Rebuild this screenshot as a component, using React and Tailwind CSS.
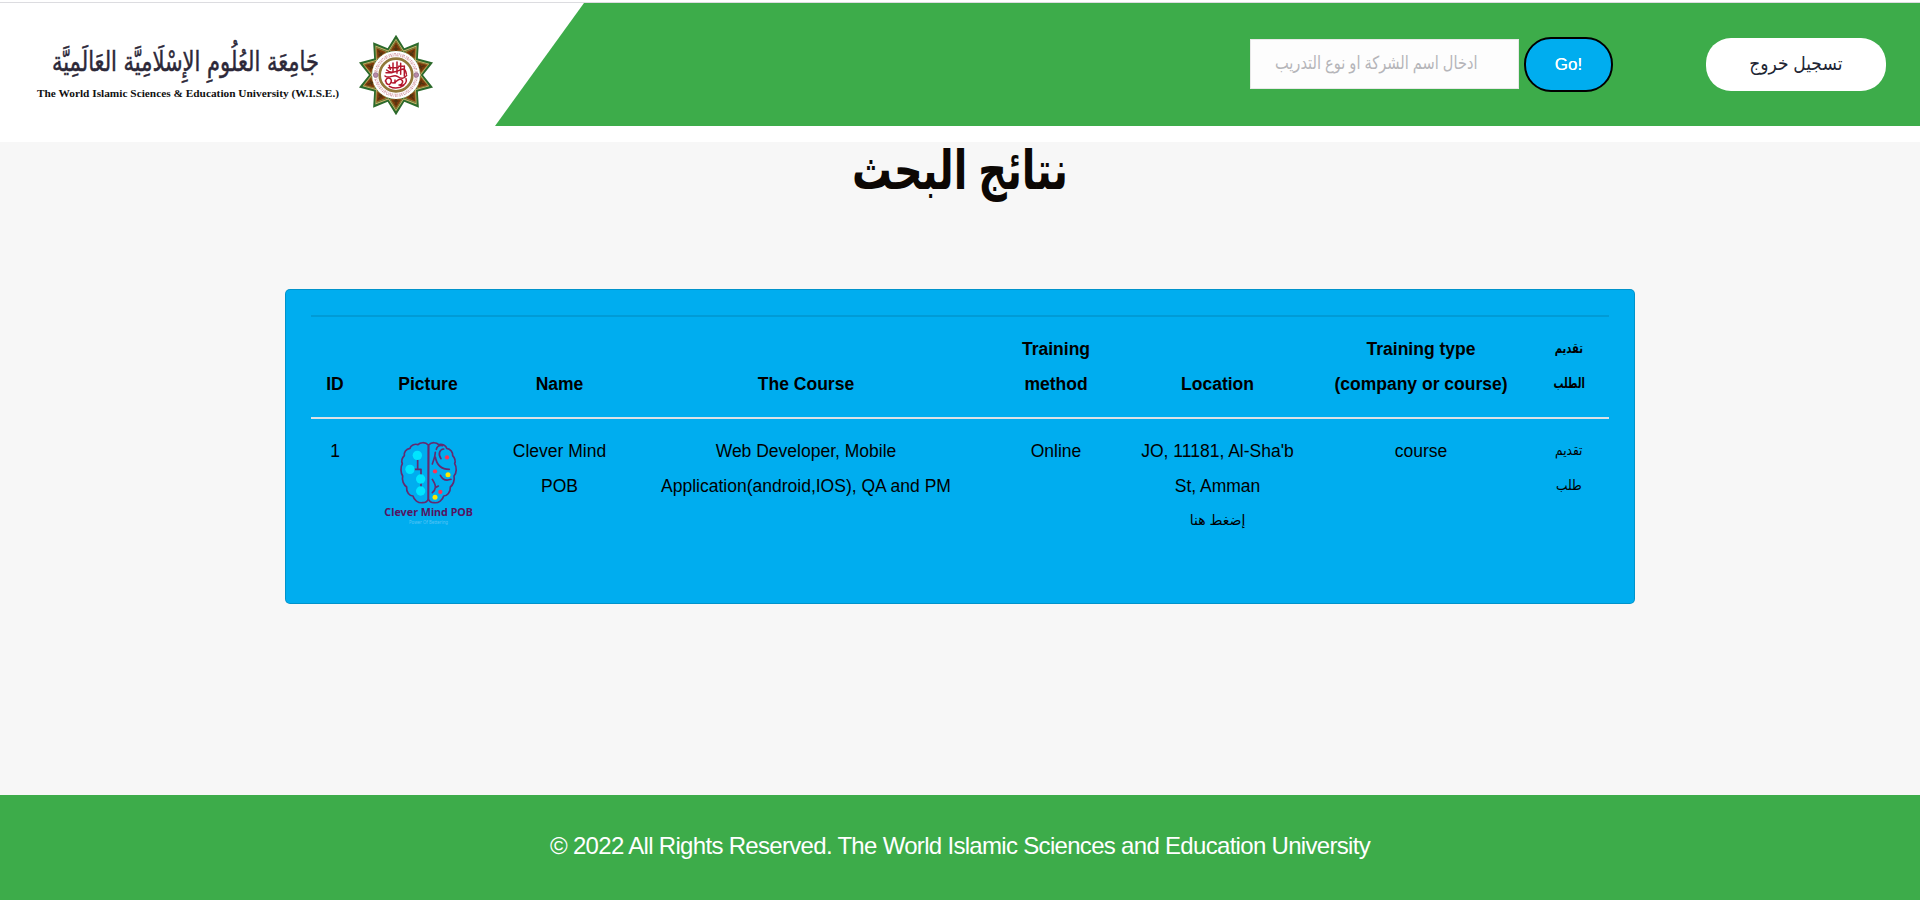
const columns = [
  { w: 'w-[48px]', head: ['ID'], body: ['1'] },
  { w: 'w-[138px]', head: ['Picture'], logo: true },
  { w: 'w-[125px]', head: ['Name'], body: ['Clever Mind', 'POB'] },
  { w: 'w-[368px]', head: ['The Course'], body: ['Web Developer, Mobile', 'Application(android,IOS), QA and PM'] },
  { w: 'w-[132px]', head: ['Training', 'method'], body: ['Online'] },
  { w: 'w-[191px]', head: ['Location'], body: ['JO, 11181, Al-Sha\'b', 'St, Amman', 'إضغط هنا'], fit: 'scale-x-100' },
  { w: 'w-[216px]', head: ['Training type', '(company or course)'], body: ['course'] },
  { w: 'w-[80px]', head: ['تقديم', 'الطلب'], headFit: 'scale-x-[0.71]', body: ['تقديم', 'طلب'], fit: 'scale-x-[0.87]' },
];

const isArabic = (s) => /[\u0600-\u06ff]/.test(s);

function Lines({ items, fit = '' }) {
  return items.map((t) => (
    <span key={t} className="block h-[35px] whitespace-nowrap">
      {isArabic(t) ? <span dir="rtl" className={`-mt-[1px] inline-block align-top text-[14px] ${fit}`}>{t}</span> : t}
    </span>
  ));
}

function Emblem() {
  const tips = Array.from({ length: 10 }, (_, i) => i * 36);
  const star = (R, r) =>
    Array.from({ length: 20 }, (_, i) => {
      const a = (i * 18 * Math.PI) / 180;
      const k = i % 2 ? r : R;
      return `${(Math.sin(a) * k * 0.965).toFixed(1)},${(-Math.cos(a) * k).toFixed(1)}`;
    }).join(' ');
  return (
    <svg viewBox="-120 -123 240 246" className="h-[82px] w-[80px] shrink-0">
      <polygon points={star(121, 84)} fill="#2c6a2b" />
      <polygon points={star(109, 77)} fill="#c9b06a" />
      <polygon points={star(104, 73)} fill="#3b6b2c" />
      {tips.map((a) => (
        <g key={a} transform={`rotate(${a})`}>
          <path d="M0-101L-18-72H18Z" fill="#7c3a0c" stroke="#a9873c" strokeWidth="2" />
          <path d="M0-90V-72M-7-78H7" stroke="#4d3510" strokeWidth="4" />
        </g>
      ))}
      <circle r="72" fill="#fff" />
      <circle r="59" fill="none" stroke="#dfb2b8" strokeWidth="6" strokeDasharray="3 2 5 2 2 3" />
      <circle r="64" fill="none" stroke="#c98490" strokeWidth="3" strokeDasharray="5 4 2 3" />
      <circle cx="-61" r="7" fill="#b98aa6" stroke="#80607f" strokeWidth="2" />
      <circle cx="61" r="7" fill="#b98aa6" stroke="#80607f" strokeWidth="2" />
      <circle r="49" fill="#fff" stroke="#92783a" strokeWidth="8" />
      <g fill="none" stroke="#b3162c" strokeWidth="4.5" strokeLinecap="round">
        <path d="M-33 3C-20 14-8-4 4 4S23 13 32 1M-28-15C-15-2 3-10 15-16S30-10 31-3" />
        <path d="M-9-36V-8M3-39V-5M14-35V-2M25-27V4M-20-29L-17-17" />
        <path d="M-32 18C-25 3-10 10-15 22S-30 28-31 17M-13 23C0 30 3 9 14 13S19 31 9 30M12 31C27 33 34 20 30 11" />
        <path d="M-20 34C-5 42 12 39 23 31M-30-7H-12M-3 15V24M-23-22H7M8-26H22" />
      </g>
    </svg>
  );
}

function UniversityName() {
  return (
    <svg viewBox="0 0 310 70" className="h-[70px] w-[310px] shrink-0 overflow-visible">
      <text x="285" y="35" direction="rtl" textLength="267" lengthAdjust="spacingAndGlyphs" fontSize="28" fontFamily="'DejaVu Sans', sans-serif" fill="#2c2838" stroke="#2c2838" strokeWidth="0.5">
        جَامِعَة العُلُومِ الإِسْلَامِيَّة العَالَمِيَّة
      </text>
      <text x="3" y="61" textLength="302" lengthAdjust="spacingAndGlyphs" fontSize="11" fontWeight="700" fontFamily="'Liberation Serif', serif" fill="#111">
        The World Islamic Sciences &amp; Education University (W.I.S.E.)
      </text>
    </svg>
  );
}

function BrainLogo() {
  return (
    <svg viewBox="33 30 282 264" className="mx-auto mt-[5px] h-[88px] w-[94px] overflow-visible">
      <g fill="none" stroke="#642a70" strokeWidth="5" strokeLinecap="round" strokeLinejoin="round">
        <path d="M175 48C166 38 150 40 144 47C134 43 121 50 120 58C108 60 101 70 103 80C95 88 94 97 97 104C91 115 92 132 98 141C95 154 101 168 110 174C108 190 119 201 129 201C132 213 144 223 158 221C168 221 173 216 175 210Z" />
        <path d="M176 48C185 38 200 40 206 47C216 43 229 50 230 58C242 60 249 70 248 80C255 88 257 97 254 104C261 115 260 132 252 141C255 154 249 168 241 174C242 190 231 201 221 201C218 213 206 223 192 221C183 221 177 216 175 210Z" />
        <path d="M143 88V121H122M143 121H153V182" />
        <path d="M196 70C196 82 191 92 187 105M196 84C200 108 214 121 238 121M199 61C202 51 210 48 218 50M213 89C203 76 209 61 221 60M211 139C217 151 229 156 243 151" />
        <path d="M187 151C192 159 197 167 196 174M205 171L196 176C195 184 191 188 187 191" />
      </g>
      <g fill="#00e5ff">
        <circle cx="142" cy="79" r="14" /><circle cx="120" cy="121" r="14" />
        <circle cx="152" cy="150" r="14" /><circle cx="152" cy="186" r="14" />
      </g>
      <g fill="#ff3355">
        <circle cx="231" cy="85" r="6.5" /><circle cx="195" cy="127" r="6.5" /><circle cx="211" cy="189" r="6.5" />
      </g>
      <g fill="#ffe600">
        <circle cx="234" cy="137" r="7.5" /><circle cx="195" cy="205" r="7.5" />
      </g>
      <text x="43" y="262" textLength="266" lengthAdjust="spacingAndGlyphs" fontSize="34" fontWeight="700" fontFamily="'Noto Sans', sans-serif" fill="#541462">Clever Mind POB</text>
      <text x="117" y="284" textLength="117" lengthAdjust="spacingAndGlyphs" fontSize="14" fontFamily="'Noto Sans', sans-serif" fill="#5cc4f5">Power Of Bettering</text>
    </svg>
  );
}

export default function App() {
  return (
    <div className="flex h-[900px] w-[1920px] flex-col overflow-hidden bg-[#f7f7f7] font-['Liberation_Sans','DejaVu_Sans',sans-serif] text-[17.5px] text-black">
      <header className="h-[142px] shrink-0 bg-white pt-[2px]">
        <div className="flex h-[124px] border-t border-[#dcdce0]">
          <div className="flex w-[495px] shrink-0 items-start pl-[34px]">
            <div className="pt-[33px]"><UniversityName /></div>
            <div className="ml-[12px] pt-[31px]"><Emblem /></div>
          </div>
          <div className="flex flex-1 items-start bg-[#3dac4a] pl-[755px] [clip-path:polygon(89px_0,100%_0,100%_100%,0_100%)]">
            <div className="mt-[36px] h-[50px] w-[269px] border border-[#e8e8e8] bg-[#fdfdfd] pl-[24px]">
              <input
                className="h-[46px] w-[270px] origin-left scale-x-[0.81] bg-transparent text-[18px] outline-none placeholder:text-[#b5b5b9]"
                placeholder="ادخال اسم الشركة او نوع التدريب"
              />
            </div>
            <button className="ml-[5px] mt-[34px] h-[55px] w-[89px] rounded-[27px] border-2 border-black bg-[#00adef] text-[17px] text-white [text-shadow:0_0_0.5px_white]">Go!</button>
            <button className="ml-[93px] mt-[35px] h-[53px] w-[180px] rounded-[25px] bg-white pb-[1px] text-[#212533]">
              <span className="inline-block scale-x-[0.9] text-[19px]">تسجيل خروج</span>
            </button>
          </div>
        </div>
      </header>

      <main className="flex flex-1 flex-col items-center">
        <h1 dir="rtl" className="flex h-[147px] shrink-0 items-start justify-center pt-[1px] text-[54px] font-bold leading-[54px] text-[#0c0704]">
          <span className="inline-block scale-x-[0.735] whitespace-nowrap">نتائج البحث</span>
        </h1>
        <section className="h-[315px] w-[1350px] rounded-[5px] border border-black/15 bg-[#00adef] px-[25px] pt-[25px]">
          <div className="h-[2px] w-[1298px] bg-black/10" />
          <table className="w-[1298px] table-fixed border-collapse text-center leading-[35px]">
            <thead>
              <tr className="border-b-2 border-[#dee2e6]">
                {columns.map((c) => (
                  <th key={c.head[0]} className={`${c.w} h-[101px] p-0 pb-[15px] align-bottom font-bold`}>
                    <Lines items={c.head} fit={c.headFit} />
                  </th>
                ))}
              </tr>
            </thead>
            <tbody>
              <tr>
                {columns.map((c) => (
                  <td key={c.head[0]} className="p-0 pt-[15px] align-top">
                    {c.logo ? <BrainLogo /> : <Lines items={c.body} fit={c.fit} />}
                  </td>
                ))}
              </tr>
            </tbody>
          </table>
        </section>
      </main>

      <footer className="flex h-[105px] shrink-0 items-start justify-center bg-[#3dac4a] pt-[33px] text-[24px] leading-[36px] tracking-[-0.69px] text-white">
        <p className="whitespace-nowrap">© 2022 All Rights Reserved. The World Islamic Sciences and Education University</p>
      </footer>
    </div>
  );
}
